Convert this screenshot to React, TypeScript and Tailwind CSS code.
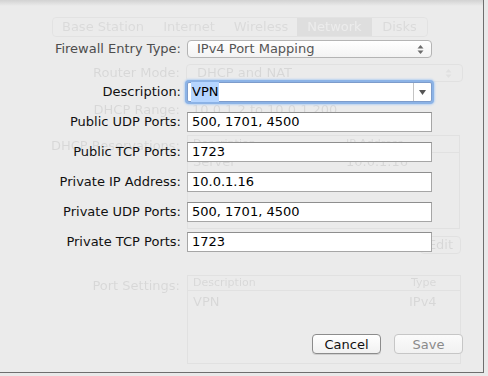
import React from 'react'

const FONT = "font-['Lucida_Grande','DejaVu_Sans',sans-serif]"

function Updown() {
  return (
    <svg width="7" height="11" viewBox="0 0 7 11" className="shrink-0">
      <path d="M3.5 1 L6.5 4.5 L0.5 4.5 Z" fill="#6b6b6b" />
      <path d="M3.5 10 L6.5 6.5 L0.5 6.5 Z" fill="#6b6b6b" />
    </svg>
  )
}

function Field({ label, value }: { label: string; value: string }) {
  return (
    <div className="flex items-center h-[20px] mt-[10px]">
      <span className="w-[181px] text-right text-[#111] whitespace-nowrap">{label}</span>
      <div className="ml-[6px] w-[245px] h-[20px] bg-white border border-[#a6a6a6] border-t-[#8e8e8e] flex items-center pl-[4px] text-black">
        {value}
      </div>
    </div>
  )
}

// faded window content behind the sheet
function Ghost() {
  return (
    <div className="absolute inset-0 opacity-[0.08] blur-[0.6px] text-black">
      <div className="mt-[17px] ml-[52px] w-[376px] h-[20px] border border-[#888] rounded-[4px] flex items-center text-[#222] overflow-hidden">
        <span className="w-[100px] text-center">Base Station</span>
        <span className="w-[72px] text-center">Internet</span>
        <span className="w-[72px] text-center">Wireless</span>
        <span className="w-[75px] h-full bg-[#555] text-white flex items-center justify-center">Network</span>
        <span className="flex-1 text-center">Disks</span>
      </div>
      <div className="flex items-center mt-[27px] h-[18px]">
        <span className="w-[180px] text-right">Router Mode:</span>
        <div className="ml-[6px] w-[277px] h-[18px] border border-[#777] rounded-[4px] flex items-center justify-between px-[10px]">
          <span>DHCP and NAT</span>
          <Updown />
        </div>
      </div>
      <div className="flex items-center mt-[20px] h-[16px]">
        <span className="w-[180px] text-right">DHCP Range:</span>
        <span className="ml-[12px]">10.0.1.2 to 10.0.1.200</span>
      </div>
      <div className="flex mt-[17px]">
        <span className="w-[180px] text-right pt-[1px]">DHCP Reservations:</span>
        <div className="ml-[7px] w-[273px] h-[94px] border border-[#777]">
          <div className="flex h-[17px] items-center border-b border-[#777] text-[11px] px-[5px]">
            <span className="w-[153px]">Description</span>
            <span className="flex-1">IP Address</span>
          </div>
          <div className="flex h-[18px] items-center px-[5px]">
            <span className="w-[153px]">Server</span>
            <span>10.0.1.16</span>
          </div>
        </div>
      </div>
      <div className="ml-[420px] mt-[7px] w-[41px] h-[18px] border border-[#777] rounded-[4px] flex items-center justify-center">
        Edit
      </div>
      <div className="flex mt-[21px]">
        <span className="w-[180px] text-right pt-[1px]">Port Settings:</span>
        <div className="ml-[7px] w-[274px] h-[89px] border border-[#777]">
          <div className="flex h-[15px] items-center border-b border-[#777] text-[11px] px-[5px]">
            <span className="w-[218px]">Description</span>
            <span>Type</span>
          </div>
          <div className="flex h-[22px] items-center px-[5px]">
            <span className="w-[216px]">VPN</span>
            <span>IPv4</span>
          </div>
        </div>
      </div>
    </div>
  )
}

export default function App() {
  return (
    <div className={`${FONT} text-[13px] w-[488px] h-[376px] bg-[#e9e9e9] overflow-hidden`}>
      <div className="w-[484px] h-[373px] bg-[#ebebeb] border-r border-b border-[#6e6e6e] relative">
        <div className="absolute inset-x-0 top-0 h-[6px] bg-gradient-to-b from-[#d2d2d2] to-transparent" />
        <Ghost />

        <div className="absolute inset-0">
          <div className="flex items-center mt-[40px] h-[18px]">
            <span className="w-[181px] text-right text-[#4d4d4d] whitespace-nowrap">Firewall Entry Type:</span>
            <div className="ml-[6px] w-[245px] h-[18px] rounded-[4px] border border-[#b4b4b4] bg-gradient-to-b from-white to-[#f3f3f3] flex items-center justify-between pl-[9px] pr-[7px] text-[#555]">
              <span>IPv4 Port Mapping</span>
              <Updown />
            </div>
          </div>

          <div className="flex items-center mt-[24px] h-[20px]">
            <span className="w-[181px] text-right text-[#111]">Description:</span>
            <div className="ml-[6px] w-[245px] h-[20px] bg-white border border-[#7d9ccb] rounded-[2px] shadow-[0_0_0_2px_#8cb3e6,0_0_2px_3px_#b9d2f1] flex items-stretch">
              <div className="flex-1 flex items-center pl-[3px]">
                <span className="bg-[#b5d5ff] text-black px-[1px]">VPN</span>
              </div>
              <div className="w-[18px] border-l border-[#c4c4c4] flex items-center justify-center">
                <svg width="7" height="5" viewBox="0 0 7 5">
                  <path d="M0 0 L7 0 L3.5 5 Z" fill="#555" />
                </svg>
              </div>
            </div>
          </div>

          <Field label="Public UDP Ports:" value="500, 1701, 4500" />
          <Field label="Public TCP Ports:" value="1723" />
          <Field label="Private IP Address:" value="10.0.1.16" />
          <Field label="Private UDP Ports:" value="500, 1701, 4500" />
          <Field label="Private TCP Ports:" value="1723" />

          <div className="flex mt-[82px] ml-[312px] gap-[13px]">
            <button className="w-[69px] h-[20px] rounded-[4px] border border-[#8c8c8c] bg-gradient-to-b from-white to-[#f1f1f1] shadow-[0_1px_0_#d0d0d0] text-[#111]">
              Cancel
            </button>
            <button className="w-[69px] h-[20px] rounded-[4px] border border-[#c6c6c6] bg-gradient-to-b from-[#fbfbfb] to-[#f1f1f1] text-[#8a8a8a]">
              Save
            </button>
          </div>
        </div>
      </div>
    </div>
  )
}
